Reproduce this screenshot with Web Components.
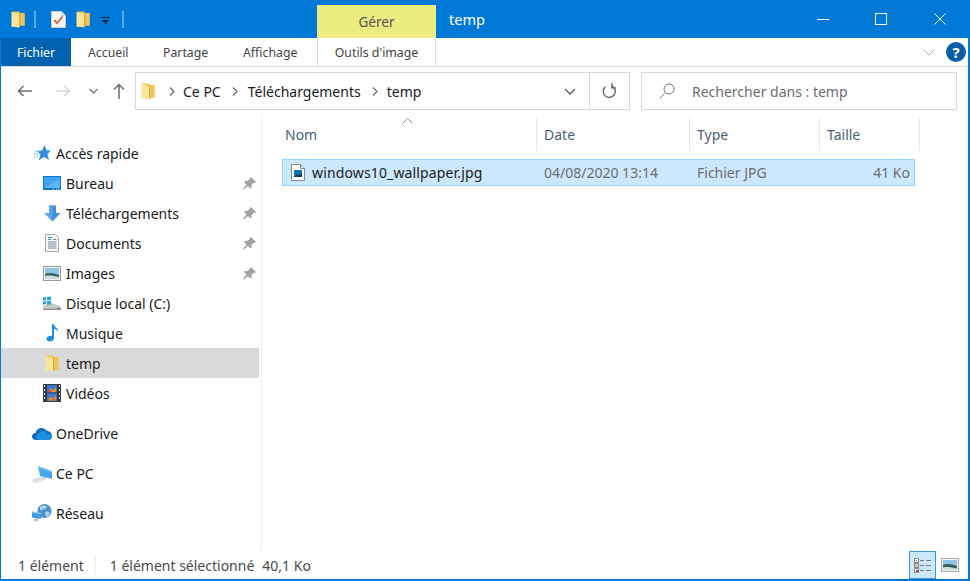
<!DOCTYPE html>
<html lang="fr">
<head>
<meta charset="utf-8">
<title>temp</title>
<style>
  html, body { margin: 0; padding: 0; background: #fff; }
  body { font-family: "Noto Sans", "Liberation Sans", sans-serif; overflow: hidden; }
</style>
</head>
<body>
<win-explorer>
  <win-titlebar slot="title" title-text="temp"></win-titlebar>
  <win-ribbon slot="ribbon"></win-ribbon>
  <win-addressbar slot="address"></win-addressbar>
  <nav-pane slot="nav">
    <nav-item icon="star" top>Accès rapide</nav-item>
    <nav-item icon="desktop" pinned>Bureau</nav-item>
    <nav-item icon="download" pinned>Téléchargements</nav-item>
    <nav-item icon="docs" pinned>Documents</nav-item>
    <nav-item icon="images" pinned>Images</nav-item>
    <nav-item icon="disk">Disque local (C:)</nav-item>
    <nav-item icon="music">Musique</nav-item>
    <nav-item icon="folder" selected>temp</nav-item>
    <nav-item icon="video">Vidéos</nav-item>
    <nav-item icon="onedrive" top group>OneDrive</nav-item>
    <nav-item icon="pc" top group>Ce PC</nav-item>
    <nav-item icon="network" top group>Réseau</nav-item>
  </nav-pane>
  <file-list slot="files"></file-list>
  <win-statusbar slot="status"></win-statusbar>
</win-explorer>

<script>
const ICONS = {
  folder: `<svg width="14" height="17" viewBox="0 0 14 17">
      <path d="M1 .5h7l1 1.500h4.500v12.500H9L1 16z" fill="#efc557"/>
      <path d="M9 2h4.500v12.500H9z" fill="#f0c65a"/>
      <path d="M.5 1l8 2.500v13L.5 15.500z" fill="#fbe59a"/>
      <path d="M8 3.500l1.500-1.500v12.500L8 16.500z" fill="#e0ab3c"/>
    </svg>`,
  checkdoc: `<svg width="15" height="17" viewBox="0 0 15 17">
      <path d="M.5.5h10l4 4v12H.5z" fill="#f8f8f8" stroke="#c9c9c9"/>
      <path d="M10.500.5v4h4" fill="#e8e8e8" stroke="#c9c9c9"/>
      <path d="M3 9l3 3.200L11.500 5.500" fill="none" stroke="#e2572b" stroke-width="1.700"/>
    </svg>`,
  star: `<svg width="18" height="16" viewBox="0 0 18 16">
      <path d="M11.500 0l2 5.200 4.500.3-3.500 3.500L16 15l-5-3-5.500 3.500 2-6L4 6l5-.5z" fill="#2f8fdc"/>
      <path d="M1.500 6h5M.5 9h5M1 12h4" stroke="#8cc6ee"/>
    </svg>`,
  desktop: `<svg width="18" height="14" viewBox="0 0 18 14">
      <rect width="18" height="14" fill="#0b78c8"/>
      <rect x="1" y="1" width="16" height="11" fill="#3fa2ef"/>
      <path d="M1 12L17 3v9z" fill="#5cb6f6"/>
      <path d="M10 13h1M13 13h1M15 13h1" stroke="#cfe8fa"/>
    </svg>`,
  download: `<svg width="17" height="17" viewBox="0 0 17 17">
      <path d="M5 .5h7v7.500h4.500L8.500 16.500.5 8H5z" fill="#3e8fe0"/>
      <path d="M5 .5h3.500v16L.5 8H5z" fill="#5aa6ec"/>
    </svg>`,
  docs: `<svg width="14" height="18" viewBox="0 0 14 18">
      <path d="M.5.5h10l3 3v14H.5z" fill="#f7f7f7" stroke="#a9a9a9"/>
      <path d="M3 3.500h4M3 5.500h3" stroke="#2f8fdc"/>
      <path d="M8 5.500h3.500M3 8h8.500M3 10h8.500M3 12h8.500M3 14h8.500" stroke="#6f8aa0"/>
    </svg>`,
  images: `<svg width="18" height="15" viewBox="0 0 18 15">
      <rect x=".5" y=".5" width="17" height="14" fill="#f3f3f3" stroke="#9a9a9a"/>
      <rect x="2" y="2" width="14" height="11" fill="#8fc6e8"/>
      <path d="M2 8c4-2 8-1 14 1v4H2z" fill="#3f5a5a"/>
      <path d="M2 10c4-1 9 0 14 1v2H2z" fill="#c9dde0"/>
    </svg>`,
  disk: `<svg width="20" height="17" viewBox="0 0 20 17">
      <path d="M1 11l9-3 9 4-3 3H3l-2-2z" fill="#c8c8c8"/>
      <path d="M1 12.500h18v2.500H1z" fill="#8e8e8e"/>
      <path d="M1 12.500h14v1H1z" fill="#e2e2e2"/>
      <path d="M1 2.500l3-.4v3L1 5.400zM5 2l4-.6v3.700l-4 .1zM1 6.400l3-.3v3.100l-3 .4zM5 6h4v3.600l-4 .5z" fill="#1fa8de"/>
    </svg>`,
  music: `<svg width="13" height="18" viewBox="0 0 13 18">
      <path d="M6 0h1.500c.6 3 4.800 3.500 4.800 8-.8-1.800-2.500-3-4.300-3.300V14c0 2.200-2 3.500-4.200 3.500C1.700 17.500.5 16.400.5 15c0-1.900 2-3.200 4-3.200.6 0 1 .1 1.500.3z" fill="#1e8fdf"/>
    </svg>`,
  video: `<svg width="18" height="18" viewBox="0 0 18 18">
      <rect width="18" height="18" fill="#3c3c3c"/>
      <path d="M1 1v2h1V1zM1 5v2h1V5zM1 9v2h1V9zM1 13v2h1v-2zM16 1v2h1V1zM16 5v2h1V5zM16 9v2h1V9zM16 13v2h1v-2z" fill="#ddd"/>
      <rect x="4" y="1" width="10" height="7.500" fill="#3d78d6"/>
      <rect x="4" y="9.500" width="10" height="7.500" fill="#3d78d6"/>
      <path d="M5 8l3-4 2 2 3-3v5zM5 16.500l2-4 3 2 3-3v5z" fill="#e0922e"/>
      <path d="M5 8l2-2 2 2zM9 16.500l2-2 2 2z" fill="#d8432b"/>
    </svg>`,
  onedrive: `<svg width="20" height="13" viewBox="0 0 20 13">
      <path d="M4 13C1.600 13 0 11.500 0 9.500 0 7.500 1.500 6.200 3.400 6 4 3 6.500 1 9.500 1c2.200 0 4 1 5 2.700C17.500 3.700 20 6 20 9c0 2.300-1.700 4-4 4z" fill="#0f6cbd"/>
      <path d="M7.500 13C5.500 13 4 11.600 4 10c0-1.700 1.300-3 3-3.200C7.700 5 9.500 4 11.300 4c2 0 3.500 1 4.300 2.700 2.400 0 4.400 1.200 4.400 3 0 1.900-1.500 3.300-3.500 3.300z" fill="#1f8fe0"/>
    </svg>`,
  pc: `<svg width="20" height="20" viewBox="0 0 20 20">
      <path d="M6 3l14 5v8l-12-3z" fill="#4aa8e8"/>
      <path d="M6 3l14 5v1.200L6.300 4.200z" fill="#8fd0f5"/>
      <path d="M10 13.500l4 1v2l-4-1z" fill="#b9c3cc"/>
      <path d="M0 17l8-3.500 6 2.500-8 4H1z" fill="#dfe2e5"/>
    </svg>`,
  network: `<svg width="20" height="18" viewBox="0 0 20 18">
      <circle cx="12.500" cy="7" r="7" fill="#4c93c9"/>
      <path d="M8 3c2-2 5-2 7 0-1 2-2 2-3 2s-2 2-4 1zM13 8c2-1 4 0 5 1-1 3-3 4-4 4z" fill="#a9d3ee"/>
      <path d="M0 7.500l9 1.500v6l-9-1.500z" fill="#3e9ee4"/>
      <path d="M0 7.500l9 1.500v1l-9-1.500z" fill="#a9d8f5"/>
      <path d="M3 14l3 .5v2l2 .8H1z" fill="#bac4cc"/>
    </svg>`,
  pin: `<svg width="13" height="13" viewBox="0 0 13 13">
      <path d="M8 0l5 5-1.200.9-.8-.4-2.500 2.500.2 2.400-1.200 1.100-2.600-2.600L1 12.500 0 12l3.500-4.400L1 5l1.100-1.200 2.400.2L7 1.500 6.800.9z" fill="#a3a3a3"/>
    </svg>`,
  photofile: `<svg width="14" height="17" viewBox="0 0 14 17">
      <path d="M.5.5h9l4 4v12H.5z" fill="#fdfdfd" stroke="#7c8b99"/>
      <path d="M9.500.5v4h4" fill="#e6e6e6" stroke="#7c8b99"/>
      <rect x="3" y="6" width="8" height="7" fill="#1a6fb8"/>
      <path d="M3 13l3-3 2 1 3-2v4z" fill="#0e3f6b"/>
    </svg>`
}

class WinIcon extends HTMLElement {
  connectedCallback() {
    if (this.shadowRoot) return
    this.attachShadow({ mode: 'open' })
    this.shadowRoot.innerHTML = `
      <style>
        :host { display: inline-flex; align-items: center; justify-content: center; }
        svg { display: block; }
      </style>
      ${ICONS[this.getAttribute('name')] || ''}
    `
  }
}
customElements.define('win-icon', WinIcon)

class WinExplorer extends HTMLElement {
  constructor() {
    super()
    this.attachShadow({ mode: 'open' })
    this.shadowRoot.innerHTML = `
      <style>
        :host {
          display: flex;
          flex-direction: column;
          box-sizing: border-box;
          width: 970px;
          height: 581px;
          background: #fff;
          border-left: 1px solid #0078d7;
          border-right: 2px solid #0078d7;
          border-bottom: 2px solid #0078d7;
          color: #1a1a1a;
        }
        .body { flex: 1; display: flex; min-height: 0; }
      </style>
      <slot name="title"></slot>
      <slot name="ribbon"></slot>
      <slot name="address"></slot>
      <div class="body">
        <slot name="nav"></slot>
        <slot name="files"></slot>
      </div>
      <slot name="status"></slot>
    `
  }
}
customElements.define('win-explorer', WinExplorer)

class WinTitlebar extends HTMLElement {
  connectedCallback() {
    this.attachShadow({ mode: 'open' })
    this.shadowRoot.innerHTML = `
      <style>
        :host {
          display: flex;
          height: 38px;
          margin: 0 -2px 0 -1px;
          background: #0078d7;
          color: #fff;
          font-size: 14px;
        }
        .qat { display: flex; align-items: center; width: 317px; height: 38px; box-sizing: border-box; padding: 0 0 0 11px; }
        .sep { width: 2px; height: 17px; background: #3d9ae3; box-shadow: inset 0 0 0 .5px #7ab9ea; }
        .sep.a { margin: 0 15px 0 9px; }
        .caret { margin: 4px 12px 0 11px; }
        .gap { margin-right: 10px; }
        .manage {
          width: 119px;
          margin-top: 5px;
          background: #ecec80;
          color: #555;
          font-size: 13.500px;
          display: flex;
          align-items: center;
          justify-content: center;
        }
        .name { flex: 1; padding: 0 0 0 13px; line-height: 39px; font-size: 14.500px; }
        .ctl { width: 58.500px; display: flex; align-items: center; justify-content: center; padding-right: 2px; box-sizing: border-box; }
        .ctl svg { margin-top: -1px; }
      </style>
      <div class="qat">
        <win-icon name="folder"></win-icon>
        <span class="sep a"></span>
        <win-icon name="checkdoc" class="gap"></win-icon>
        <win-icon name="folder"></win-icon>
        <svg class="caret" width="9" height="8" viewBox="0 0 9 8"><path d="M0 0h9v1H0zM1 3h7L4.500 7z" fill="#10203a"/></svg>
        <span class="sep"></span>
      </div>
      <div class="manage">Gérer</div>
      <div class="name">${this.getAttribute('title-text')}</div>
      <div class="ctl"><svg width="12" height="12"><path d="M0 6.500h12" stroke="#fff"/></svg></div>
      <div class="ctl"><svg width="12" height="12"><rect x=".5" y=".5" width="11" height="11" fill="none" stroke="#fff"/></svg></div>
      <div class="ctl"><svg width="12" height="12"><path d="M.5.5l11 11M11.500.5l-11 11" stroke="#fff"/></svg></div>
    `
  }
}
customElements.define('win-titlebar', WinTitlebar)

class WinRibbon extends HTMLElement {
  constructor() {
    super()
    this.attachShadow({ mode: 'open' })
    this.shadowRoot.innerHTML = `
      <style>
        :host {
          display: flex;
          align-items: stretch;
          height: 29px;
          box-sizing: border-box;
          border-bottom: 1px solid #dadada;
          font-size: 12.300px;
          color: #444;
        }
        .tab { display: flex; align-items: center; }
        .file { width: 70px; background: #0063b1; color: #fff; justify-content: center; }
        .a { width: 92px; box-sizing: border-box; padding-left: 17px; }
        .b { width: 80px; }
        .c { width: 74px; }
        .tools {
          width: 119px;
          box-sizing: border-box;
          justify-content: center;
          border-left: 1px solid #dadada;
          border-right: 1px solid #dadada;
        }
        .end { margin-left: auto; display: flex; align-items: center; gap: 11px; padding-right: 2px; }
        .help {
          width: 20px; height: 20px; border-radius: 50%;
          background: #0a5fa8; color: #fff;
          font: bold 15px/20px "Noto Sans", sans-serif;
          text-align: center;
        }
      </style>
      <div class="tab file">Fichier</div>
      <div class="tab a">Accueil</div>
      <div class="tab b">Partage</div>
      <div class="tab c">Affichage</div>
      <div class="tab tools">Outils d'image</div>
      <div class="end">
        <svg width="12" height="7" viewBox="0 0 12 7"><path d="M.5.5L6 6 11.500.5" fill="none" stroke="#b0b0b0"/></svg>
        <div class="help">?</div>
      </div>
    `
  }
}
customElements.define('win-ribbon', WinRibbon)

class WinAddressbar extends HTMLElement {
  constructor() {
    super()
    this.attachShadow({ mode: 'open' })
    this.shadowRoot.innerHTML = `
      <style>
        :host {
          display: flex;
          height: 48px;
          box-sizing: border-box;
          padding: 5px 11px 5px 0;
          font-size: 14px;
        }
        .nav { display: flex; align-items: center; width: 134px; flex: none; padding-left: 16px; box-sizing: border-box; }
        .nav svg { display: block; }
        .crumbs {
          flex: none;
          width: 495px;
          box-sizing: border-box;
          border: 1px solid #d9d9d9;
          display: flex;
          align-items: center;
          padding-left: 5px;
          color: #1a1a1a;
        }
        .crumbs .chev { margin: 0 9px 0 11px; }
        .crumbs .chev.first { margin: 0 8px 0 14px; }
        .crumbs .chev.mid { margin: 0 10px 0 11px; }
        .drop { margin-left: auto; display: flex; align-items: center; width: 39px; justify-content: center; }
        .refresh { width: 39px; align-self: stretch; border-left: 1px solid #d9d9d9; display: flex; align-items: center; justify-content: center; }
        .search {
          flex: none;
          margin-left: 11px;
          width: 316px;
          box-sizing: border-box;
          border: 1px solid #d9d9d9;
          display: flex;
          align-items: center;
          padding-left: 17px;
          gap: 17px;
          color: #6d6d6d;
        }
      </style>
      <div class="nav">
        <svg width="15" height="12" viewBox="0 0 15 12"><path d="M15 6H1.500M6.500 1L1.500 6l5 5" fill="none" stroke="#6d6d6d" stroke-width="1.500"/></svg>
        <svg style="margin-left:24px" width="15" height="12" viewBox="0 0 15 12"><path d="M0 6h13.500M8.500 1l5 5-5 5" fill="none" stroke="#d6d6d6" stroke-width="1.500"/></svg>
        <svg style="margin-left:18px" width="9" height="6" viewBox="0 0 9 6"><path d="M.5 1l4 4 4-4" fill="none" stroke="#7a7a7a" stroke-width="1.300"/></svg>
        <svg style="margin-left:15px" width="12" height="16" viewBox="0 0 12 16"><path d="M6 16V1.500M1 6.500l5-5 5 5" fill="none" stroke="#6d6d6d" stroke-width="1.500"/></svg>
      </div>
      <div class="crumbs">
        <win-icon name="folder"></win-icon>
        <svg class="chev first" width="6" height="9" viewBox="0 0 6 9"><path d="M1 .5l4 4-4 4" fill="none" stroke="#6d6d6d" stroke-width="1.200"/></svg>
        <span>Ce PC</span>
        <svg class="chev mid" width="6" height="9" viewBox="0 0 6 9"><path d="M1 .5l4 4-4 4" fill="none" stroke="#6d6d6d" stroke-width="1.200"/></svg>
        <span>Téléchargements</span>
        <svg class="chev" width="6" height="9" viewBox="0 0 6 9"><path d="M1 .5l4 4-4 4" fill="none" stroke="#6d6d6d" stroke-width="1.200"/></svg>
        <span>temp</span>
        <div class="drop"><svg width="12" height="7" viewBox="0 0 12 7"><path d="M1 1l5 5 5-5" fill="none" stroke="#666" stroke-width="1.500"/></svg></div>
        <div class="refresh"><svg width="15" height="16" viewBox="0 0 15 16"><path d="M9.500 2.800A6 6 0 1 1 3 4.200M9.500 0v4.500H14" transform="rotate(4 7 8)" fill="none" stroke="#6d6d6d" stroke-width="1.500"/></svg></div>
      </div>
      <div class="search">
        <svg width="16" height="16" viewBox="0 0 16 16"><circle cx="10" cy="6" r="5" fill="none" stroke="#777"/><path d="M6.500 9.500L.5 15.500" stroke="#777"/></svg>
        <span>Rechercher dans : temp</span>
      </div>
    `
  }
}
customElements.define('win-addressbar', WinAddressbar)

class NavPane extends HTMLElement {
  constructor() {
    super()
    this.attachShadow({ mode: 'open' })
    this.shadowRoot.innerHTML = `
      <style>
        :host {
          display: block;
          flex: none;
          width: 261px;
          box-sizing: border-box;
          padding: 23px 0 0;
          border-right: 1px solid #eeeeee;
          font-size: 14px;
        }
      </style>
      <slot></slot>
    `
  }
}
customElements.define('nav-pane', NavPane)

class NavItem extends HTMLElement {
  connectedCallback() {
    this.attachShadow({ mode: 'open' })
    const pin = this.hasAttribute('pinned') ? '<win-icon class="pin" name="pin"></win-icon>' : ''
    this.shadowRoot.innerHTML = `
      <style>
        :host {
          display: flex;
          align-items: center;
          width: 258px;
          height: 30px;
          box-sizing: border-box;
          padding-left: 41px;
          color: #1a1a1a;
        }
        :host([top]) { padding-left: 31px; }
        :host([group]) { margin-top: 10px; }
        :host([selected]) { background: #d9d9d9; }
        .ico { width: 20px; display: flex; justify-content: center; margin-right: 4px; flex: none; }
        .pin { margin-left: auto; margin-right: 3px; }
      </style>
      <span class="ico"><win-icon name="${this.getAttribute('icon')}"></win-icon></span>
      <slot></slot>
      ${pin}
    `
  }
}
customElements.define('nav-item', NavItem)

class FileList extends HTMLElement {
  constructor() {
    super()
    this.attachShadow({ mode: 'open' })
    this.shadowRoot.innerHTML = `
      <style>
        :host {
          display: block;
          flex: 1;
          position: relative;
          padding: 3px 0 0 20px;
          font-size: 14px;
        }
        .head {
          display: grid;
          grid-template-columns: 255px 153px 130px 100px;
          height: 33px;
          color: #4c607a;
        }
        .head div { display: flex; align-items: center; padding: 0 0 0 7px; border-right: 1px solid #e5e5e5; }
        .head div:first-child { padding-left: 3px; }
        .sort { position: absolute; left: 140px; top: 3px; }
        .row {
          display: grid;
          grid-template-columns: 254px 153px 130px 94px;
          box-sizing: border-box;
          width: 633px;
          height: 27px;
          margin-top: 8px;
          background: #cce8ff;
          border: 1px solid #99d1ff;
          color: #6d6d6d;
          align-items: center;
        }
        .row > span { padding-left: 7px; }
        .row .name { display: flex; align-items: center; gap: 7px; padding-left: 8px; color: #1a1a1a; letter-spacing: .14px; }
        .row .size { text-align: right; padding: 0 4px 0 0; }
      </style>
      <div class="head">
        <div>Nom</div><div>Date</div><div>Type</div><div>Taille</div>
      </div>
      <svg class="sort" width="11" height="6" viewBox="0 0 11 6"><path d="M.5 5.500l5-5 5 5" fill="none" stroke="#8a8a8a"/></svg>
      <div class="row">
        <span class="name"><win-icon name="photofile"></win-icon>windows10_wallpaper.jpg</span>
        <span>04/08/2020 13:14</span>
        <span>Fichier JPG</span>
        <span class="size">41 Ko</span>
      </div>
    `
  }
}
customElements.define('file-list', FileList)

class WinStatusbar extends HTMLElement {
  constructor() {
    super()
    this.attachShadow({ mode: 'open' })
    this.shadowRoot.innerHTML = `
      <style>
        :host {
          display: flex;
          align-items: center;
          height: 28px;
          padding-left: 17px;
          font-size: 14px;
          color: #4a4a4a;
        }
        .sep { width: 1px; height: 18px; background: #eeeeee; margin: 0 14px 0 11px; }
        .size { margin-left: 8px; }
        .views { margin-left: auto; display: flex; align-items: center; gap: 5px; padding-right: 9px; align-self: stretch; }
        .list {
          width: 27px;
          height: 28px;
          box-sizing: border-box;
          background: #cce8ff;
          border: 1px solid #3b97cf;
          display: flex;
          align-items: center;
          justify-content: center;
        }
      </style>
      <span>1 élément</span>
      <span class="sep"></span>
      <span>1 élément sélectionné</span>
      <span class="size">40,1 Ko</span>
      <div class="views">
        <div class="list">
          <svg width="17" height="15" viewBox="0 0 17 15">
            <rect x=".5" y=".5" width="4" height="4" fill="#fff" stroke="#8a8a8a"/><rect x="2" y="2" width="1" height="1" fill="#1f7a9c"/>
            <rect x=".5" y="5.500" width="4" height="4" fill="#d8c79a" stroke="#8a8a8a"/>
            <rect x=".5" y="10.500" width="4" height="4" fill="#fff" stroke="#8a8a8a"/><rect x="2" y="12" width="2" height="2" fill="#a8302a"/>
            <path d="M6 2.500h4M12 2.500h5M6 7.500h4M12 7.500h5M6 12.500h4M12 12.500h5" stroke="#7a7a7a"/>
          </svg>
        </div>
        <svg width="18" height="14" viewBox="0 0 18 14">
          <rect x=".5" y=".5" width="17" height="13" fill="#f3f3f3" stroke="#a9a9a9"/>
          <rect x="2" y="2" width="14" height="10" fill="#8fc6e8"/>
          <path d="M2 7c4-2 8-1 14 1v4H2z" fill="#3f5a5a"/>
          <path d="M2 9.500c4-1 9 0 14 1V12H2z" fill="#c9dde0"/>
        </svg>
      </div>
    `
  }
}
customElements.define('win-statusbar', WinStatusbar)
</script>
</body>
</html>
